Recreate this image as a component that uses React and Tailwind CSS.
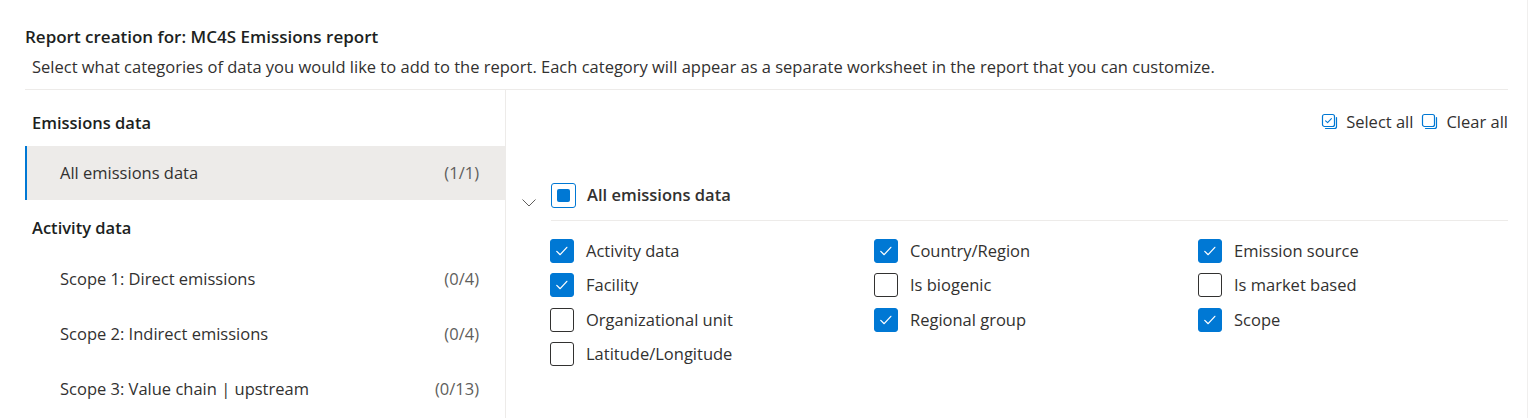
import React, { useState } from 'react'

const FONT = { fontFamily: '"Segoe UI", "Open Sans", "Noto Sans", sans-serif' }

const CATEGORIES = [
  { section: 'Emissions data', items: [{ label: 'All emissions data', count: '(1/1)', active: true }] },
  {
    section: 'Activity data',
    items: [
      { label: 'Scope 1: Direct emissions', count: '(0/4)' },
      { label: 'Scope 2: Indirect emissions', count: '(0/4)' },
      { label: 'Scope 3: Value chain | upstream', count: '(0/13)' },
    ],
  },
]

const FIELDS = [
  ['Activity data', true], ['Country/Region', true], ['Emission source', true],
  ['Facility', true], ['Is biogenic', false], ['Is market based', false],
  ['Organizational unit', false], ['Regional group', true], ['Scope', true],
  ['Latitude/Longitude', false],
]

const Check = ({ checked, onClick }) => (
  <button
    onClick={onClick}
    className={`flex h-[24px] w-[24px] shrink-0 items-center justify-center rounded-[3px] border ${checked ? 'border-[#0078d4] bg-[#0078d4]' : 'border-[#323130] bg-white'}`}
  >
    {checked && (
      <svg width="24" height="24" viewBox="0 0 24 24" fill="none">
        <path d="M6.3 12.4 L10 16 L17.3 8" stroke="white" strokeWidth="1.4" strokeLinecap="round" strokeLinejoin="round" />
      </svg>
    )}
  </button>
)

const StackIcon = ({ checked }) => (
  <svg width="18" height="18" viewBox="0 0 18 18" fill="none">
    <rect x="1.5" y="1.5" width="12" height="12" rx="2" stroke="#0078d4" strokeWidth="1.2" />
    <path d="M15.5 4.5 V13.5 A2 2 0 0 1 13.5 15.5 H4.5" stroke="#0078d4" strokeWidth="1.2" strokeLinecap="round" />
    {checked && <path d="M4.6 7.8 L6.6 9.6 L10.4 5.6" stroke="#0078d4" strokeWidth="1.1" strokeLinecap="round" strokeLinejoin="round" />}
  </svg>
)

const App = () => {
  const [fields, setFields] = useState(FIELDS.map(f => f[1]))
  const checkedCount = fields.filter(Boolean).length
  const mixed = checkedCount > 0 && checkedCount < fields.length

  return (
    <div className="h-[418px] w-[1528px] overflow-hidden border-r border-[#f0efee] bg-white pl-[25px] pr-[19px] text-[#323130]" style={FONT}>
      <div className="border-b border-[#edebe9] pb-[11px] pt-[26px]">
        <h1 className="text-[17px] font-semibold leading-[22px] text-[#201f1e]">Report creation for: MC4S Emissions report</h1>
        <p className="mt-[8px] pl-[7px] text-[16.5px] leading-[22px]">
          Select what categories of data you would like to add to the report. Each category will appear as a separate worksheet in the report that you can customize.
        </p>
      </div>

      <div className="flex h-full">
        {/* category list */}
        <div className="w-[481px] shrink-0 border-r border-[#edebe9]">
          {CATEGORIES.map((c, ci) => (
            <div key={c.section}>
              <div className={`px-[7px] text-[16.5px] font-semibold leading-[22px] text-[#201f1e] ${ci === 0 ? 'pb-[12px] pt-[22px]' : 'pb-[13px] pt-[17px]'}`}>
                {c.section}
              </div>
              {c.items.map(it => (
                <div
                  key={it.label}
                  className={`flex items-center justify-between pr-[26px] text-[16.5px] ${it.active ? 'h-[54px] border-l-2 border-[#0078d4] bg-[#edebe9] pl-[33px]' : 'h-[55px] pl-[35px]'}`}
                >
                  <span>{it.label}</span>
                  <span className="text-[#605e5c]">{it.count}</span>
                </div>
              ))}
            </div>
          ))}
        </div>

        {/* field selection */}
        <div className="flex-1 pl-[16px]">
          <div className="flex justify-end gap-[8px] pt-[21px] text-[16.5px] leading-[22px]">
            <button className="flex items-center gap-[7px]"><StackIcon checked />Select all</button>
            <button className="flex items-center gap-[7px]" onClick={() => setFields(fields.map(() => false))}><StackIcon />Clear all</button>
          </div>

          <div className="mt-[50px] flex h-[25px] items-center">
            <svg width="14" height="8" viewBox="0 0 14 8" fill="none" className="mt-[14px]">
              <path d="M0.5 0.5 L7 7 L13.5 0.5" stroke="#605e5c" strokeWidth="1" />
            </svg>
            <button
              onClick={() => setFields(fields.map(() => !mixed && checkedCount === 0))}
              className="ml-[15px] flex h-[25px] w-[25px] items-center justify-center rounded-[3px] border border-[#0078d4]"
            >
              {mixed && <span className="h-[13px] w-[13px] rounded-[2px] bg-[#0078d4]" />}
            </button>
            <span className="ml-[11px] text-[16.5px] font-semibold">All emissions data</span>
          </div>
          <div className="ml-[29px] mt-[12px] border-t border-[#edebe9]" />

          <div className="ml-[28px] mt-[18px] grid grid-cols-[324px_324px_1fr]">
            {FIELDS.map(([label], i) => (
              <label key={label} className="flex h-[34.4px] items-start gap-[12px] text-[16.5px]">
                <Check checked={fields[i]} onClick={() => setFields(fields.map((v, j) => (j === i ? !v : v)))} />
                <span className="leading-[24px]">{label}</span>
              </label>
            ))}
          </div>
        </div>
      </div>
    </div>
  )
}

export default App
